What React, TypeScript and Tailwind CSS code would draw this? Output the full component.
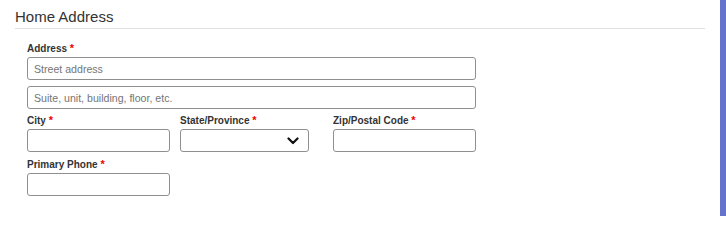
import React from "react"

function Label({ text }: { text: string }) {
  return (
    <label className="block h-[14px] mb-[2px] text-[10px] leading-[14px] font-bold text-[#333]">
      {text} <span className="text-[#e00] text-[11px]">*</span>
    </label>
  )
}

const inputCls =
  "block w-full h-[23px] px-[6px] border border-[#8f8f8f] rounded-[3px] bg-white text-[10.6px] text-[#333] placeholder:text-[#757575] outline-none"

export default function App() {
  return (
    <div className="flex w-[726px] h-[216px] bg-white font-['Liberation_Sans',Arial,sans-serif]">
      <div className="flex-1 pl-[15px] pr-[15px]">
        <h2 className="pt-[8px] pb-[3px] text-[15px] leading-[17px] text-[#333] border-b border-[#e1e1e1]">
          Home Address
        </h2>

        <div className="ml-[12px] w-[459px] pt-[12px]">
          <div className="pr-[10px]">
            <Label text="Address" />
            <input className={inputCls} placeholder="Street address" />
            <input className={inputCls + " mt-[6px]"} placeholder="Suite, unit, building, floor, etc." />
          </div>

          <div className="grid grid-cols-3 mt-[4px]">
            <div className="pr-[10px]">
              <Label text="City" />
              <input className={inputCls} />
            </div>
            <div className="pr-[10px]">
              <Label text="State/Province" />
              <div className="relative w-[129px] h-[23px] border border-[#8f8f8f] rounded-[3px] bg-white">
                <svg
                  className="absolute right-[9px] top-[7px]"
                  width="12"
                  height="8"
                  viewBox="0 0 12 8"
                  fill="none"
                  stroke="#111"
                  strokeWidth="2.2"
                  strokeLinecap="round"
                  strokeLinejoin="round"
                >
                  <path d="M1.5 1.5 L6 6 L10.5 1.5" />
                </svg>
              </div>
            </div>
            <div className="pr-[10px]">
              <Label text="Zip/Postal Code" />
              <input className={inputCls} />
            </div>
          </div>

          <div className="grid grid-cols-3 mt-[5px]">
            <div className="pr-[10px]">
              <Label text="Primary Phone" />
              <input className={inputCls} />
            </div>
          </div>
        </div>
      </div>
      <div className="w-[6px] h-full bg-[#6673cc]" />
    </div>
  )
}
